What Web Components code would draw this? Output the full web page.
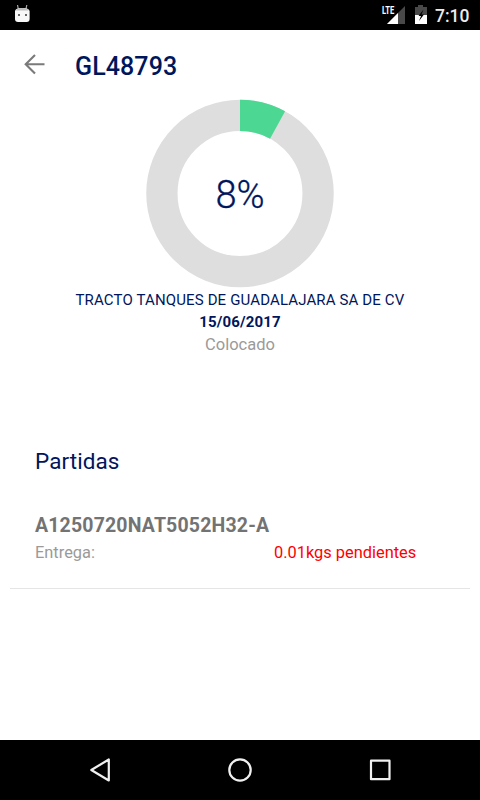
<!DOCTYPE html>
<html lang="es">
<head>
<meta charset="utf-8">
<title>GL48793</title>
<style>
    body {
        margin: 0;
        background: #fff;
        font-family: Roboto, sans-serif;
        color: #00165c;
    }
</style>
</head>
<body>
<order-screen>
    <status-bar slot="top" time="7:10"></status-bar>
    <app-toolbar slot="top">GL48793</app-toolbar>
    <progress-ring value="8"></progress-ring>
    <order-info>
        <span slot="client">TRACTO TANQUES DE GUADALAJARA SA DE CV</span>
        <span slot="date">15/06/2017</span>
        <span slot="status">Colocado</span>
    </order-info>
    <item-list heading="Partidas">
        <order-item code="A1250720NAT5052H32-A">
            <span slot="label">Entrega:</span>
            <span slot="pending">0.01kgs pendientes</span>
        </order-item>
    </item-list>
    <nav-bar slot="bottom"></nav-bar>
</order-screen>

<script>
// small helper so every element gets its open shadow root the same way
function render(elem, html) {
    elem.attachShadow({ mode: 'open' }).innerHTML = html;
}

customElements.define('order-screen', class extends HTMLElement {
    constructor() {
        super();
        render(this, `
        <style>
        :host { display: flex; flex-direction: column; height: 800px; overflow: hidden; }
        main { flex: 1; }
        </style>
        <slot name="top"></slot>
        <main><slot></slot></main>
        <slot name="bottom"></slot>
        `);
    }
});

customElements.define('status-bar', class extends HTMLElement {
    connectedCallback() {
        render(this, `
        <style>
        :host { display: flex; height: 30px; background: #000; color: #ececec; }
        svg { display: block; flex: none; }
        .gap { flex: 1; }
        .time { width: 45px; font-size: 17.500px; font-weight: 500; line-height: 32px; white-space: nowrap; }
        </style>
        <svg width="46" height="30" viewBox="0 0 46 30">
            <path d="M17.500 5l.8 4M26.800 5l-.8 4" stroke="#aaa" stroke-width="1.200"/>
            <path d="M15 11q.5-3 7.300-3t7.300 3v8q0 3-3 3h-8.600q-3 0-3-3z" fill="#f8f8f8"/>
            <path d="M16 10.500q1-2.500 6.300-2.500t6.300 2.500z" fill="#bbb"/>
            <rect x="18" y="14" width="2" height="2" fill="#666"/>
            <rect x="25" y="14" width="2" height="2" fill="#666"/>
        </svg>
        <div class="gap"></div>
        <svg width="55" height="30" viewBox="380 0 55 30">
            <path d="M405 6v18h-18z" fill="#494949"/>
            <path d="M380 4h15.500v11h-15.500z" fill="#000"/>
            <path d="M398 13v11h-11z" fill="#fff"/>
            <text x="382" y="14" font-size="11" font-weight="700" fill="#fff" textLength="12.200" lengthAdjust="spacingAndGlyphs">LTE</text>
            <path d="M418 5h5v2h4v9h-12V7h3z" fill="#494949"/>
            <path d="M415 15h12v9h-12z" fill="#fff"/>
            <path d="M423.500 9.500l-5 6.500h2.500L419 21l5-6.500h-2.500z" fill="#000"/>
        </svg>
        <div class="time">${this.getAttribute('time')}</div>
        `);
    }
});

customElements.define('app-toolbar', class extends HTMLElement {
    constructor() {
        super();
        render(this, `
        <style>
        :host { display: flex; height: 69px; }
        svg { display: block; width: 75px; height: 69px; }
        h1 { margin: 0; font-size: 25px; font-weight: 500; line-height: 73px; letter-spacing: .1px; }
        </style>
        <svg viewBox="0 0 75 69" fill="none" stroke="#7a7a7a" stroke-width="2.100">
            <path d="M44.500 34.300H26M35 25l-9.300 9.300L35 43.600"/>
        </svg>
        <h1><slot></slot></h1>
        `);
    }
});

customElements.define('progress-ring', class extends HTMLElement {
    connectedCallback() {
        var val = this.getAttribute('value');
        // green arc starts at 12 o'clock, pathLength makes it a plain percentage
        render(this, `
        <style>
        :host { display: grid; justify-items: center; align-items: center; height: 189px; }
        svg, .value { grid-area: 1 / 1; }
        svg { display: block; }
        circle { fill: none; stroke-width: 31.300; }
        .value { font-size: 38px; font-weight: 300; line-height: 48px; padding-top: 2px; -webkit-text-stroke: .3px; }
        </style>
        <svg width="190" height="189" viewBox="-95 -94.500 190 189">
            <circle r="78.100" stroke="#dedede"/>
            <circle r="78.100" stroke="#4cd893" pathLength="100" stroke-dasharray="${val} 100" transform="rotate(-90)"/>
        </svg>
        <div class="value">${val}%</div>
        `);
    }
});

customElements.define('order-info', class extends HTMLElement {
    constructor() {
        super();
        render(this, `
        <style>
        :host { display: block; text-align: center; padding-top: 1px; white-space: nowrap; }
        div { height: 22px; line-height: 22px; font-size: 15px; letter-spacing: .14px; }
        .date { font-weight: 700; }
        .status { font-size: 16.500px; line-height: 23px; letter-spacing: 0; color: #9a9a9a; }
        </style>
        <div><slot name="client"></slot></div>
        <div class="date"><slot name="date"></slot></div>
        <div class="status"><slot name="status"></slot></div>
        `);
    }
});

customElements.define('item-list', class extends HTMLElement {
    connectedCallback() {
        render(this, `
        <style>
        :host { display: block; padding: 91px 10px 0; }
        h2 { margin: 0 0 38px; padding-left: 25px; font-size: 22.500px; font-weight: 400; line-height: 30px; letter-spacing: .07px; }
        </style>
        <h2>${this.getAttribute('heading')}</h2>
        <slot></slot>
        `);
    }
});

customElements.define('order-item', class extends HTMLElement {
    connectedCallback() {
        render(this, `
        <style>
        :host { display: block; height: 74px; padding-left: 25px; border-bottom: 1px solid #e5e5e5; }
        .code { font-size: 19.500px; font-weight: 700; line-height: 24px; letter-spacing: .16px; color: #737373; }
        .row { display: grid; grid-template-columns: 239px 1fr; font-size: 16.400px; line-height: 29px; color: #9a9a9a; }
        .pending { color: #fe0000; }
        </style>
        <div class="code">${this.getAttribute('code')}</div>
        <div class="row">
            <slot name="label"></slot>
            <div class="pending"><slot name="pending"></slot></div>
        </div>
        `);
    }
});

customElements.define('nav-bar', class extends HTMLElement {
    constructor() {
        super();
        render(this, `
        <style>
        :host { display: flex; justify-content: center; gap: 80px; height: 60px; background: #000; }
        svg { width: 60px; height: 60px; fill: none; stroke: #f0f0f0; stroke-width: 2.200; stroke-linejoin: round; }
        </style>
        <svg viewBox="0 0 60 60"><path d="M38.800 19.500v21L21.300 30z"/></svg>
        <svg viewBox="0 0 60 60"><circle cx="30" cy="30" r="10.700"/></svg>
        <svg viewBox="0 0 60 60"><rect x="21" y="20.700" width="18.500" height="18.500"/></svg>
        `);
    }
});
</script>
</body>
</html>
